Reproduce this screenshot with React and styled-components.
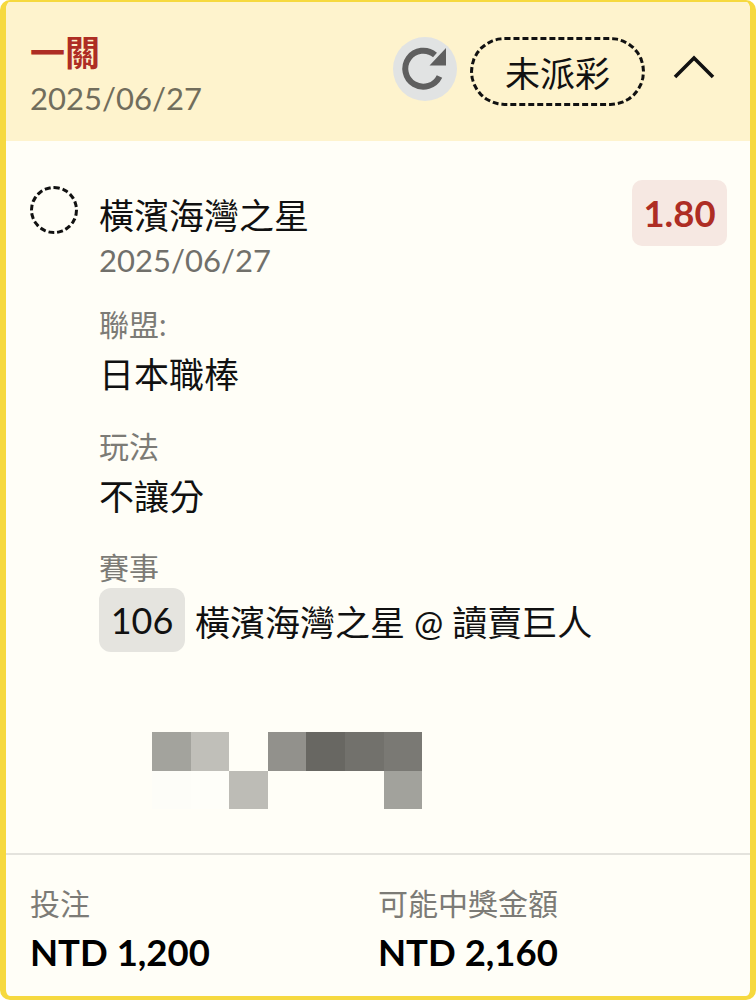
import React from "react";
import styled, { createGlobalStyle } from "styled-components";

const GlobalStyle = createGlobalStyle`
  html, body {
    margin: 0;
    padding: 0;
    background: #ffffff;
    font-family: Lato, "Noto Sans CJK TC", sans-serif;
  }
`;

const mosaicCells = [
  "#a3a39d", "#c0bfb9", null, "#92918c", "#686762", "#72716c", "#7a7974",
  "#fdfdf8", "#fefef9", "#bdbcb6", null, null, null, "#a2a29c",
];

function App() {
  return (
    <>
      <GlobalStyle />
      <Card>
        <Header>
          <HeaderInfo>
            <ParlayTitle>一關</ParlayTitle>
            <HeaderDate>2025/06/27</HeaderDate>
          </HeaderInfo>
          <HeaderActions>
            <RefreshButton>
              <svg width="64" height="64" viewBox="0 0 64 64">
                <path
                  d="M46.5 39.5A18 18 0 1 1 42 18"
                  fill="none"
                  stroke="#5f5f5f"
                  strokeWidth="6"
                />
                <path d="M53 11v17.5H36.5z" fill="#5f5f5f" />
              </svg>
            </RefreshButton>
            <StatusPill>未派彩</StatusPill>
            <Chevron>
              <svg width="44" height="26" viewBox="0 0 44 26">
                <path
                  d="M3 23L22 4l19 19"
                  fill="none"
                  stroke="#111"
                  strokeWidth="3.6"
                />
              </svg>
            </Chevron>
          </HeaderActions>
        </Header>

        <Body>
          <SelectionRow>
            <RadioMark />
            <SelectionMain>
              <TeamName>橫濱海灣之星</TeamName>
              <SelectionDate>2025/06/27</SelectionDate>
            </SelectionMain>
            <OddsBadge>1.80</OddsBadge>
          </SelectionRow>

          <Details>
            <DetailBlock>
              <DetailLabel>聯盟:</DetailLabel>
              <DetailValue>日本職棒</DetailValue>
            </DetailBlock>
            <DetailBlock>
              <DetailLabel>玩法</DetailLabel>
              <DetailValue>不讓分</DetailValue>
            </DetailBlock>
            <DetailBlock>
              <DetailLabel>賽事</DetailLabel>
              <MatchRow>
                <MatchNumber>106</MatchNumber>
                <MatchName>橫濱海灣之星 @ 讀賣巨人</MatchName>
              </MatchRow>
            </DetailBlock>
          </Details>

          <Mosaic>
            {mosaicCells.map((color, i) => (
              <MosaicCell key={i} $color={color} />
            ))}
          </Mosaic>
        </Body>

        <Footer>
          <FooterColumn>
            <FooterLabel>投注</FooterLabel>
            <FooterAmount>NTD 1,200</FooterAmount>
          </FooterColumn>
          <FooterColumn>
            <FooterLabel>可能中獎金額</FooterLabel>
            <FooterAmount>NTD 2,160</FooterAmount>
          </FooterColumn>
        </Footer>
      </Card>
    </>
  );
}

export default App;

const Card = styled.div`
  box-sizing: border-box;
  width: 756px;
  height: 1000px;
  display: flex;
  flex-direction: column;
  background: #fffef7;
  border: solid #f6d93f;
  border-width: 2px 6px 4px 6px;
  border-radius: 10px;
  overflow: hidden;
`;

const Header = styled.div`
  box-sizing: border-box;
  height: 139px;
  flex-shrink: 0;
  display: flex;
  justify-content: space-between;
  padding: 30px 34px 0 24px;
  background: #fef3cd;
`;

const HeaderInfo = styled.div`
  display: flex;
  flex-direction: column;
`;

const ParlayTitle = styled.div`
  font-size: 35px;
  line-height: 40px;
  font-weight: 700;
  color: #ae2d24;
`;

const HeaderDate = styled.div`
  font-size: 31px;
  line-height: 42px;
  margin-top: 5px;
  color: #716d5c;
`;

const HeaderActions = styled.div`
  display: flex;
  align-items: flex-start;
`;

const RefreshButton = styled.div`
  width: 64px;
  height: 64px;
  margin-top: 5px;
  border-radius: 50%;
  background: #e1e3e3;
  display: flex;
  align-items: center;
  justify-content: center;
`;

const StatusPill = styled.div`
  box-sizing: border-box;
  width: 175px;
  height: 69px;
  margin: 5px 0 0 13px;
  border: 3px dashed #111;
  border-radius: 35px;
  display: flex;
  align-items: center;
  justify-content: center;
  font-size: 35px;
  color: #111;
`;

const Chevron = styled.div`
  margin: 22px 0 0 27px;
  display: flex;
`;

const Body = styled.div`
  flex: 1;
  padding: 39px 23px 0 24px;
  border-bottom: 2px solid #e4e3dd;
`;

const SelectionRow = styled.div`
  display: flex;
  align-items: flex-start;
`;

const RadioMark = styled.div`
  box-sizing: border-box;
  width: 48px;
  height: 48px;
  margin-top: 6px;
  flex-shrink: 0;
  border: 3px dashed #111;
  border-radius: 50%;
`;

const SelectionMain = styled.div`
  flex: 1;
  margin: 12px 0 0 21px;
`;

const TeamName = styled.div`
  font-size: 35px;
  line-height: 46px;
  color: #111;
`;

const SelectionDate = styled.div`
  font-size: 31px;
  line-height: 40px;
  margin-top: 2px;
  color: #71706b;
`;

const OddsBadge = styled.div`
  box-sizing: border-box;
  width: 95px;
  height: 66px;
  border-radius: 10px;
  background: #f6e8e2;
  display: flex;
  align-items: center;
  justify-content: center;
  font-size: 36.5px;
  font-weight: 700;
  color: #ae2d24;
`;

const Details = styled.div`
  display: flex;
  flex-direction: column;
  gap: 23.5px;
  margin: 25px 0 0 69px;
`;

const DetailBlock = styled.div`
  display: flex;
  flex-direction: column;
`;

const DetailLabel = styled.div`
  font-size: 30px;
  line-height: 38px;
  margin-bottom: 2px;
  color: #7c7b76;
`;

const DetailValue = styled.div`
  font-size: 35px;
  line-height: 58px;
  color: #111;
`;

const MatchRow = styled.div`
  display: flex;
  align-items: center;
`;

const MatchNumber = styled.div`
  box-sizing: border-box;
  width: 86px;
  height: 64px;
  border-radius: 12px;
  background: #e5e4df;
  display: flex;
  align-items: center;
  justify-content: center;
  font-size: 36px;
  color: #111;
`;

const MatchName = styled.div`
  margin-left: 10px;
  font-size: 35px;
  color: #111;
`;

const Mosaic = styled.div`
  display: grid;
  grid-template-columns: repeat(7, 38.6px);
  grid-auto-rows: 38.5px;
  margin: 80px 0 0 122px;
`;

const MosaicCell = styled.div`
  background: ${(p) => p.$color || "transparent"};
`;

const Footer = styled.div`
  box-sizing: border-box;
  height: 141px;
  flex-shrink: 0;
  display: grid;
  grid-template-columns: 348px 1fr;
  padding: 25px 24px 0;
`;

const FooterColumn = styled.div`
  display: flex;
  flex-direction: column;
`;

const FooterLabel = styled.div`
  font-size: 30px;
  line-height: 47px;
  color: #7c7b76;
`;

const FooterAmount = styled.div`
  font-size: 36.5px;
  line-height: 50px;
  font-weight: 700;
  color: #000;
`;
